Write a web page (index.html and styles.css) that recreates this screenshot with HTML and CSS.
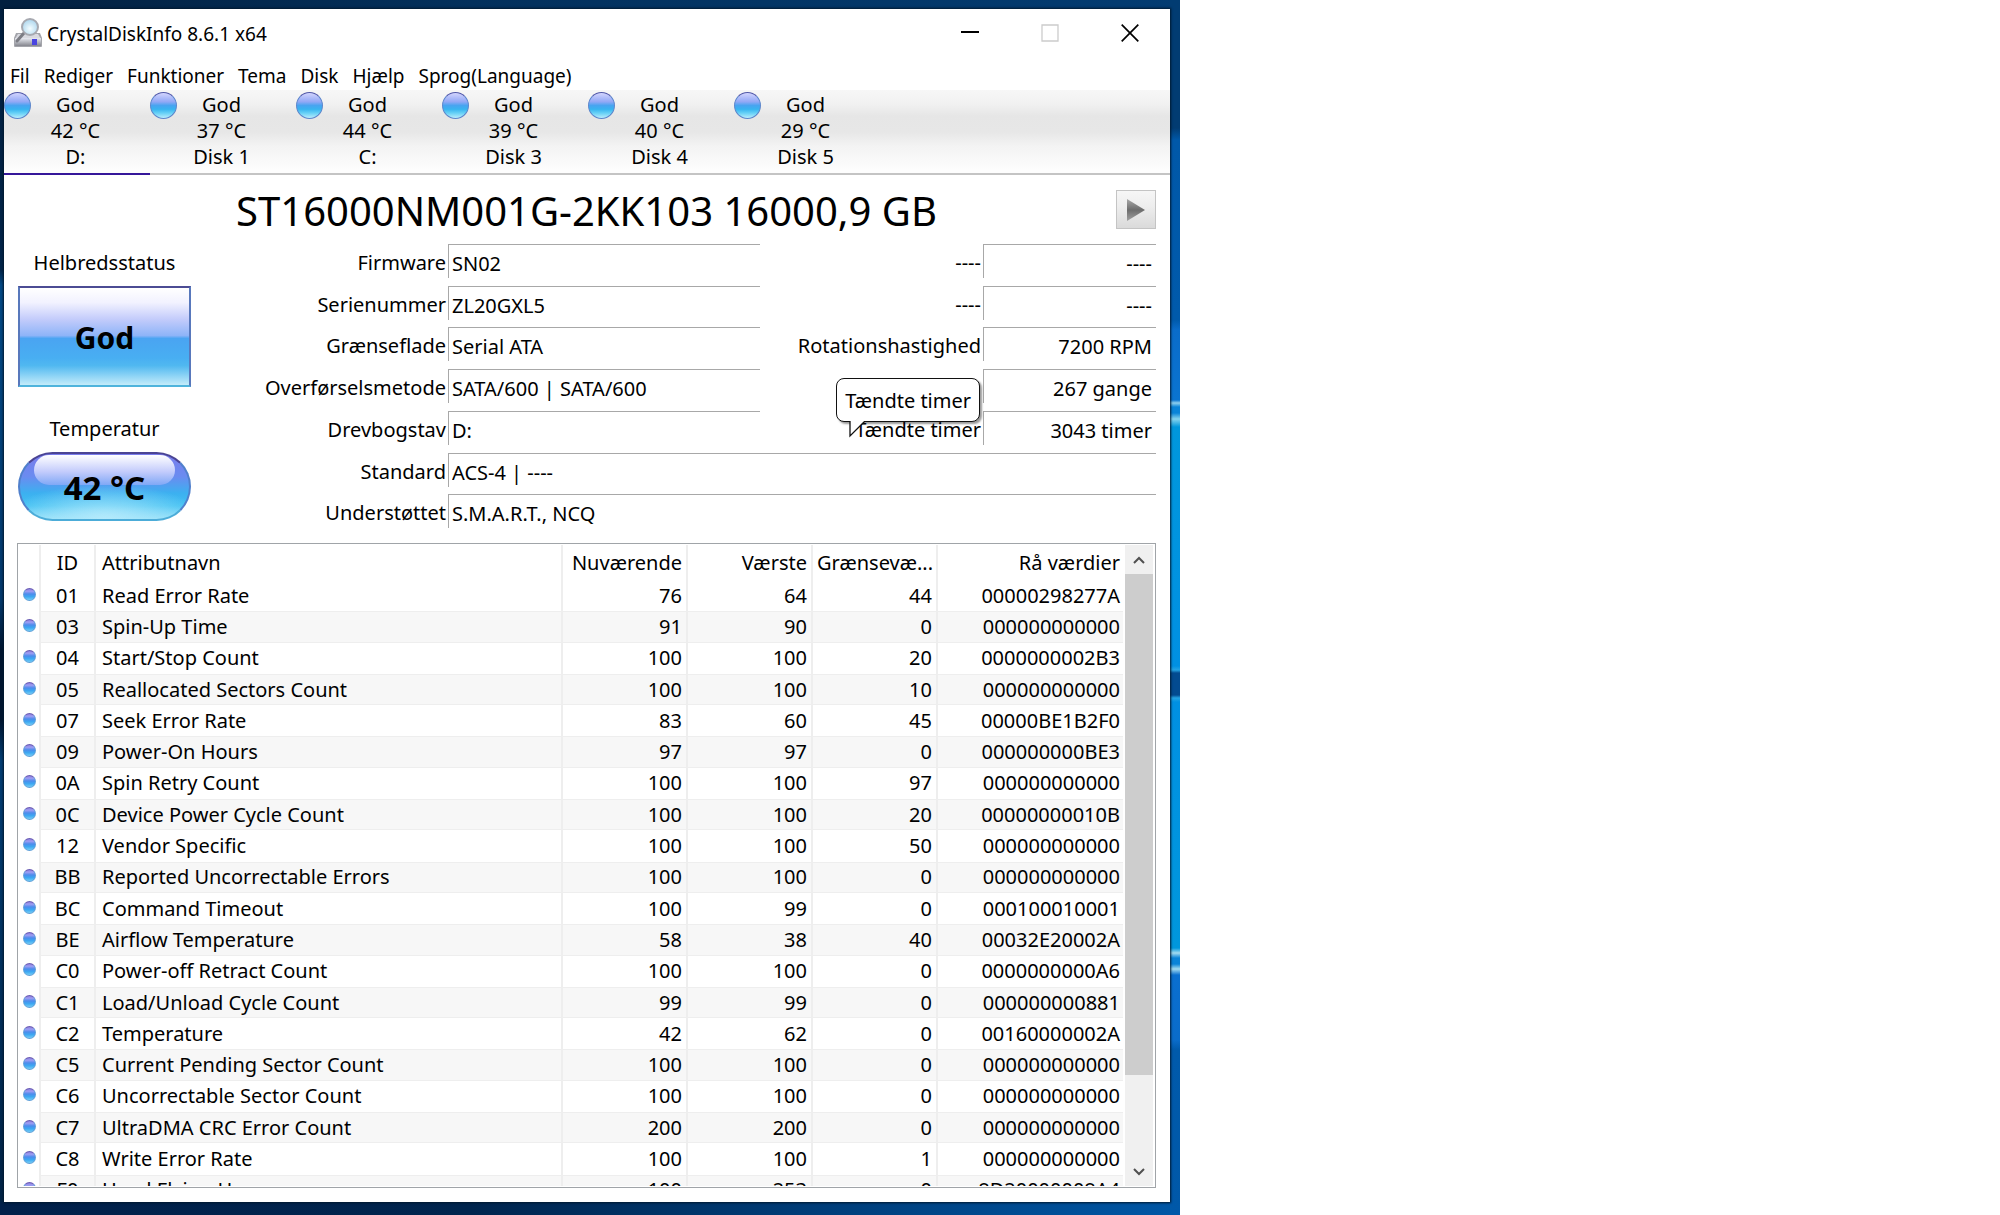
FILE: index.html
```html
<!DOCTYPE html>
<html lang="da">
<head>
<meta charset="utf-8">
<title>CrystalDiskInfo 8.6.1 x64</title>
<link rel="stylesheet" href="styles.css">
</head>
<body>
<div class="desktop">
<div class="window">
  <header class="titlebar">
    <svg class="app-icon" viewBox="0 0 28 30" aria-hidden="true">
      <defs>
        <linearGradient id="drive" x1="0" y1="0" x2="0" y2="1"><stop offset="0" stop-color="#e9ebf2"/><stop offset="1" stop-color="#85868e"/></linearGradient>
        <radialGradient id="lens" cx=".5" cy=".6" r=".6"><stop offset="0" stop-color="#f4fdff"/><stop offset="1" stop-color="#a9d4ec"/></radialGradient>
      </defs>
      <path d="M2 15h24l2 5v8q0 1-1 1H1q-1 0-1-1v-8z" fill="#a4a5ab"/>
      <path d="M4 16h20l3 5H1z" fill="#d9dae0"/>
      <rect x="1" y="20" width="26" height="8" rx="1" fill="url(#drive)"/>
      <rect x="18" y="21" width="5" height="6" fill="#4a45e0"/>
      <path d="M10 15L3 23" stroke="#7c7d84" stroke-width="3" stroke-linecap="round"/>
      <circle cx="16" cy="9" r="8" fill="url(#lens)" stroke="#a7a9b0" stroke-width="2"/>
    </svg>
    <span class="app-title">CrystalDiskInfo 8.6.1 x64</span>
    <button class="caption" aria-label="Minimer"><svg viewBox="0 0 18 18"><path d="M0 8h18" stroke="#000" stroke-width="2"/></svg></button>
    <button class="caption" aria-label="Maksimer" disabled><svg viewBox="0 0 18 18"><path d="M1 1h16v16H1z" fill="none" stroke="#ccc" stroke-width="1.300"/></svg></button>
    <button class="caption" aria-label="Luk"><svg viewBox="0 0 18 18"><path d="M.7.7l16.600 16.600M17.300.7L.7 17.300" stroke="#000" stroke-width="1.700"/></svg></button>
  </header>
  <nav class="menu">
    <button>Fil</button><button>Rediger</button><button>Funktioner</button><button>Tema</button><button>Disk</button><button>Hjælp</button><button>Sprog(Language)</button>
  </nav>
  <div class="disks">
    <button class="disk selected"><span class="orb"></span><span>God<br>42 °C<br>D:</span></button>
    <button class="disk"><span class="orb"></span><span>God<br>37 °C<br>Disk 1</span></button>
    <button class="disk"><span class="orb"></span><span>God<br>44 °C<br>C:</span></button>
    <button class="disk"><span class="orb"></span><span>God<br>39 °C<br>Disk 3</span></button>
    <button class="disk"><span class="orb"></span><span>God<br>40 °C<br>Disk 4</span></button>
    <button class="disk"><span class="orb"></span><span>God<br>29 °C<br>Disk 5</span></button>
  </div>
  <main class="content">
    <div class="model">
      <h1>ST16000NM001G-2KK103 16000,9 GB</h1>
      <button class="next" aria-label="Næste disk"><svg viewBox="0 0 18 22"><defs><linearGradient id="arrow" x1="0" y1="0" x2="0" y2="1"><stop offset="0" stop-color="#a8a8a8"/><stop offset=".5" stop-color="#6c6c6c"/><stop offset="1" stop-color="#a0a0a0"/></linearGradient></defs><path d="M0 0l18 11L0 22z" fill="url(#arrow)"/></svg></button>
    </div>
    <div class="info">
      <div class="status">
        <span class="caption-text">Helbredsstatus</span>
        <button class="health">God</button>
        <span class="caption-text">Temperatur</span>
        <button class="temperature"><span>42 °C</span></button>
      </div>
      <div class="fields">
        <label for="fw">Firmware</label><input id="fw" readonly value="SN02">
        <label for="x1">----</label><input id="x1" class="num" readonly value="----">
        <label for="sn">Serienummer</label><input id="sn" readonly value="ZL20GXL5">
        <label for="x2">----</label><input id="x2" class="num" readonly value="----">
        <label for="if">Grænseflade</label><input id="if" readonly value="Serial ATA">
        <label for="rpm">Rotationshastighed</label><input id="rpm" class="num" readonly value="7200 RPM">
        <label for="tm">Overførselsmetode</label><input id="tm" readonly value="SATA/600 | SATA/600">
        <input class="num last-col" aria-label="gange" readonly value="267 gange">
        <label for="dl">Drevbogstav</label><input id="dl" readonly value="D:">
        <div class="hours">
          <label for="hr">Tændte timer</label>
          <div class="tooltip" role="tooltip">Tændte timer
            <svg class="tail" viewBox="0 0 18 18" aria-hidden="true"><path d="M1 0V16L15 1.500V0z" fill="#fff"/><path d="M1 1V16L15.500 1.500" fill="none" stroke="#111" stroke-width="1.300"/></svg>
          </div>
        </div><input id="hr" class="num" readonly value="3043 timer">
        <label for="st">Standard</label><input id="st" class="wide" readonly value="ACS-4 | ----">
        <label for="ft">Understøttet</label><input id="ft" class="wide" readonly value="S.M.A.R.T., NCQ">
      </div>
    </div>
    <div class="list">
      <div class="viewport">
      <table>
        <colgroup><col class="c-dot"><col class="c-id"><col><col class="c-num"><col class="c-num"><col class="c-num"><col class="c-raw"></colgroup>
        <thead><tr><th></th><th>ID</th><th>Attributnavn</th><th>Nuværende</th><th>Værste</th><th>Grænsevæ...</th><th>Rå værdier</th></tr></thead>
        <tbody>
        <tr><td><i class="dot"></i></td><td>01</td><td>Read Error Rate</td><td>76</td><td>64</td><td>44</td><td>00000298277A</td></tr>
        <tr><td><i class="dot"></i></td><td>03</td><td>Spin-Up Time</td><td>91</td><td>90</td><td>0</td><td>000000000000</td></tr>
        <tr><td><i class="dot"></i></td><td>04</td><td>Start/Stop Count</td><td>100</td><td>100</td><td>20</td><td>0000000002B3</td></tr>
        <tr><td><i class="dot"></i></td><td>05</td><td>Reallocated Sectors Count</td><td>100</td><td>100</td><td>10</td><td>000000000000</td></tr>
        <tr><td><i class="dot"></i></td><td>07</td><td>Seek Error Rate</td><td>83</td><td>60</td><td>45</td><td>00000BE1B2F0</td></tr>
        <tr><td><i class="dot"></i></td><td>09</td><td>Power-On Hours</td><td>97</td><td>97</td><td>0</td><td>000000000BE3</td></tr>
        <tr><td><i class="dot"></i></td><td>0A</td><td>Spin Retry Count</td><td>100</td><td>100</td><td>97</td><td>000000000000</td></tr>
        <tr><td><i class="dot"></i></td><td>0C</td><td>Device Power Cycle Count</td><td>100</td><td>100</td><td>20</td><td>00000000010B</td></tr>
        <tr><td><i class="dot"></i></td><td>12</td><td>Vendor Specific</td><td>100</td><td>100</td><td>50</td><td>000000000000</td></tr>
        <tr><td><i class="dot"></i></td><td>BB</td><td>Reported Uncorrectable Errors</td><td>100</td><td>100</td><td>0</td><td>000000000000</td></tr>
        <tr><td><i class="dot"></i></td><td>BC</td><td>Command Timeout</td><td>100</td><td>99</td><td>0</td><td>000100010001</td></tr>
        <tr><td><i class="dot"></i></td><td>BE</td><td>Airflow Temperature</td><td>58</td><td>38</td><td>40</td><td>00032E20002A</td></tr>
        <tr><td><i class="dot"></i></td><td>C0</td><td>Power-off Retract Count</td><td>100</td><td>100</td><td>0</td><td>0000000000A6</td></tr>
        <tr><td><i class="dot"></i></td><td>C1</td><td>Load/Unload Cycle Count</td><td>99</td><td>99</td><td>0</td><td>000000000881</td></tr>
        <tr><td><i class="dot"></i></td><td>C2</td><td>Temperature</td><td>42</td><td>62</td><td>0</td><td>00160000002A</td></tr>
        <tr><td><i class="dot"></i></td><td>C5</td><td>Current Pending Sector Count</td><td>100</td><td>100</td><td>0</td><td>000000000000</td></tr>
        <tr><td><i class="dot"></i></td><td>C6</td><td>Uncorrectable Sector Count</td><td>100</td><td>100</td><td>0</td><td>000000000000</td></tr>
        <tr><td><i class="dot"></i></td><td>C7</td><td>UltraDMA CRC Error Count</td><td>200</td><td>200</td><td>0</td><td>000000000000</td></tr>
        <tr><td><i class="dot"></i></td><td>C8</td><td>Write Error Rate</td><td>100</td><td>100</td><td>1</td><td>000000000000</td></tr>
        <tr><td><i class="dot"></i></td><td>F0</td><td>Head Flying Hours</td><td>100</td><td>253</td><td>0</td><td>8D20000008A4</td></tr>
        </tbody>
      </table>
      </div>
      <div class="scrollbar">
        <button aria-label="Rul op"><svg viewBox="0 0 12 8"><path d="M1 7l5-5 5 5" fill="none" stroke="#505050" stroke-width="2"/></svg></button>
        <div class="track"><div class="thumb"></div></div>
        <button aria-label="Rul ned"><svg viewBox="0 0 12 8"><path d="M1 1l5 5 5-5" fill="none" stroke="#505050" stroke-width="2"/></svg></button>
      </div>
    </div>
  </main>
</div>
</div>
</body>
</html>
```
FILE: styles.css
```css
* { box-sizing: border-box; }
body {
  margin: 0;
  background: #fff;
  color: #000;
  font: 20px/26px "Noto Sans", "Open Sans", sans-serif;
}
button, input {
  margin: 0;
  padding: 0;
  border: 0;
  background: none;
  color: inherit;
  font: inherit;
}
svg { display: block; }

/* Wallpaper: dark frame with the glowing edge on the right */
.desktop {
  display: flex;
  width: 59%;
  height: 100vh;
  padding: 9px 10px 13px 4px;
  background:
    linear-gradient(180deg, #023c72 0, #023c72 128px, #0058a8 140px, #005aab 320px,
      #0a6cca 330px, #0a74d0 400px, #8fd0ee 403px, #0a84d8 407px, #0a84d8 413px,
      #86d4ee 419px, #0097dc 427px, #0090e2 666px, #24a4e4 670px, #034b90 673px,
      #034b90 695px, #24a4e4 698px, #0090e2 702px, #0097dc 948px, #a4dcf0 953px,
      #0a84d8 958px, #0a84d8 964px, #a4dcf0 969px, #0a6fd0 975px, #0a6cca 1040px,
      #005aab 1050px, #0058a8 100%) right top / 10px 100% no-repeat,
    linear-gradient(90deg, #01204a, #00254e 40%, #0057a6) left bottom / 100% 13px no-repeat,
    linear-gradient(90deg, #02203f, #02305c 40%, #023c72) left top / 100% 9px no-repeat,
    linear-gradient(180deg, #02203f 0, #02254a 270px, #034a86 285px, #03396c 600px,
      #011630 650px, #011630 720px, #033e74 760px, #012244 100%);
}
.window {
  display: flex;
  flex: 1;
  flex-direction: column;
  min-width: 0;
  background: #fff;
  box-shadow: 0 0 2px 1px #00182e;
}

.titlebar { display: flex; align-items: center; height: 50px; padding-left: 10px; }
.app-icon { width: 28px; height: 30px; margin-bottom: 3px; }
.app-title { flex: 1; padding-left: 5px; font-size: 19px; }
.caption { display: grid; place-items: center; width: 80px; height: 50px; padding-bottom: 2px; }
.caption svg { width: 18px; height: 18px; }

.menu { display: flex; gap: 14px; height: 31px; padding: 2px 6px 0; font-size: 19px; }

.disks {
  display: flex;
  height: 85px;
  background: linear-gradient(180deg, #f7f7f7 0, #f1f1f1 14px, #e6e6e6 26px, #e7e7e7 42px, #f3f3f3 56px, #fdfdfd 80px);
  box-shadow: inset 0 -2px #c4c4c4;
}
.disk { display: flex; flex-direction: column; position: relative; width: 146px; padding: 2px 3px 0 0; text-align: center; }
.disk.selected { border-bottom: 2px solid #35179a; }
.orb {
  position: absolute;
  top: 2px;
  left: 0;
  width: 27px;
  height: 27px;
  border: 1px solid #5c86cc;
  border-top-color: #5058a8;
  border-radius: 50%;
  background: linear-gradient(180deg, #d2d4fd 0, #92a8f6 35%, #48a4f0 50%, #38b4f0 65%, #66d0f6 80%, #b8ecfc 100%);
}

.content { display: flex; flex: 1; flex-direction: column; min-height: 0; padding: 0 14px 14px 13px; }
.model { display: grid; grid-template-columns: 40px 1fr 40px; align-items: center; height: 69px; }
h1 { grid-column: 2; margin: 0; padding-top: 2px; font-size: 40px; font-weight: 400; line-height: 60px; text-align: center; white-space: nowrap; }
.next {
  display: grid;
  place-items: center;
  height: 39px;
  border: 1px solid #c4c4c4;
  background: linear-gradient(180deg, #f6f6f6, #eee 40%, #dadada);
}
.next svg { width: 18px; height: 22px; }

.info { display: flex; height: 292px; }
.status { display: flex; flex-direction: column; width: 174px; padding: 6px 0 15px 1px; text-align: center; }
.caption-text { height: 36px; }
.health, .temperature { padding-top: 4px; font-size: 30px; font-weight: 700; }
.health {
  height: 103px;
  margin-bottom: 29px;
  border: 2px solid #4fb0dc;
  border-color: #4c4c94 #5878bc #4fb4dc;
  background: linear-gradient(180deg, #fff 0, #f2f2ff 15%, #c4ccfb 32%, #8eb4f8 49%, #4aa4f2 52%, #48aef2 72%, #50b8f0 80%, #c4ecfa 100%);
}
.temperature {
  position: relative;
  height: 70px;
  border: 2px solid #3f9fd4;
  border-color: #4a4494 #5080cc #4cacd8;
  border-radius: 35px;
  background:
    radial-gradient(ellipse 60% 34px at 50% 100%, #b4eafc, #78d4f600),
    linear-gradient(180deg, #7a7cec 0, #6a8cf0 35%, #3cb0f0 60%, #40c0f2 80%, #90def8 100%);
  font-size: 33px;
}
.temperature::before {
  content: "";
  position: absolute;
  inset: 1px 14px 34px;
  border-radius: 22px;
  background: linear-gradient(180deg, #fff, #c4ccfc 55%, #80a8f6);
}
.temperature span { position: relative; }

.fields {
  display: grid;
  flex: 1;
  grid-template-columns: 257fr 312fr 223fr 173fr;
  grid-template-rows: repeat(7, 1fr);
}
.fields label { padding: 6px 2px 0 0; text-align: right; white-space: nowrap; }
.fields input {
  width: 100%;
  height: 34px;
  padding: 4px 4px 0 3px;
  border: solid #a8a8a8;
  border-width: 1px 0 0 1px;
  outline: 0;
}
.fields .num { text-align: right; }
.fields .last-col { grid-column: 4; }
.fields .wide { grid-column: 2 / 5; }
.hours { position: relative; display: grid; }
.tooltip {
  position: absolute;
  right: 3px;
  bottom: 31px;
  padding: 9px 8px 7px;
  border: 1px solid #111;
  border-radius: 8px;
  background: #fff;
  box-shadow: 2px 2px 2px #0006;
  white-space: nowrap;
}
.tail { position: absolute; top: 41px; left: 12px; width: 18px; height: 18px; }

.list { display: flex; flex: 1; min-height: 0; margin-top: 7px; border: 1px solid #a0a4a8; padding: 1px 2px 1px 0; }
.viewport { flex: 1; overflow: hidden; background: #fff; }
table { width: 100%; height: 661px; border-collapse: separate; border-spacing: 0; table-layout: fixed; }
.c-dot { width: 23px; }
.c-id { width: 55px; }
.c-num { width: 125px; }
.c-raw { width: 187px; }
th, td {
  height: 31px;
  padding: 0 4px;
  border-right: 2px solid #eee;
  font-weight: 400;
  line-height: 26px;
  text-align: right;
  white-space: nowrap;
}
th { height: 35px; }
th:nth-child(2), td:nth-child(2) { text-align: center; }
th:nth-child(3), td:nth-child(3) { padding-left: 6px; text-align: left; }
th:last-child, td:last-child { padding-right: 3px; border-right-color: #fff; }
tbody tr:nth-child(even) td:not(:first-child) {
  background: #f7f7f7;
  box-shadow: inset 0 1px #eee, inset 0 -1px #eee;
}
.dot {
  display: block;
  width: 13px;
  height: 13px;
  margin: 0 0 3px;
  border: 1px solid #5f9fd8;
  border-top-color: #6a5cb4;
  border-radius: 50%;
  background: linear-gradient(180deg, #8c80dc 0, #a09cf2 20%, #4c8cec 45%, #3ca8f2 70%, #74ccf4 100%);
}
td:first-child { padding-left: 5px; padding-right: 0; }

.scrollbar { display: flex; flex-direction: column; width: 28px; background: #f0f0f0; }
.scrollbar button { display: grid; place-items: center; height: 29px; }
.scrollbar svg { width: 12px; height: 8px; }
.track { flex: 1; }
.thumb { height: 86%; background: #cdcdcd; }
```
